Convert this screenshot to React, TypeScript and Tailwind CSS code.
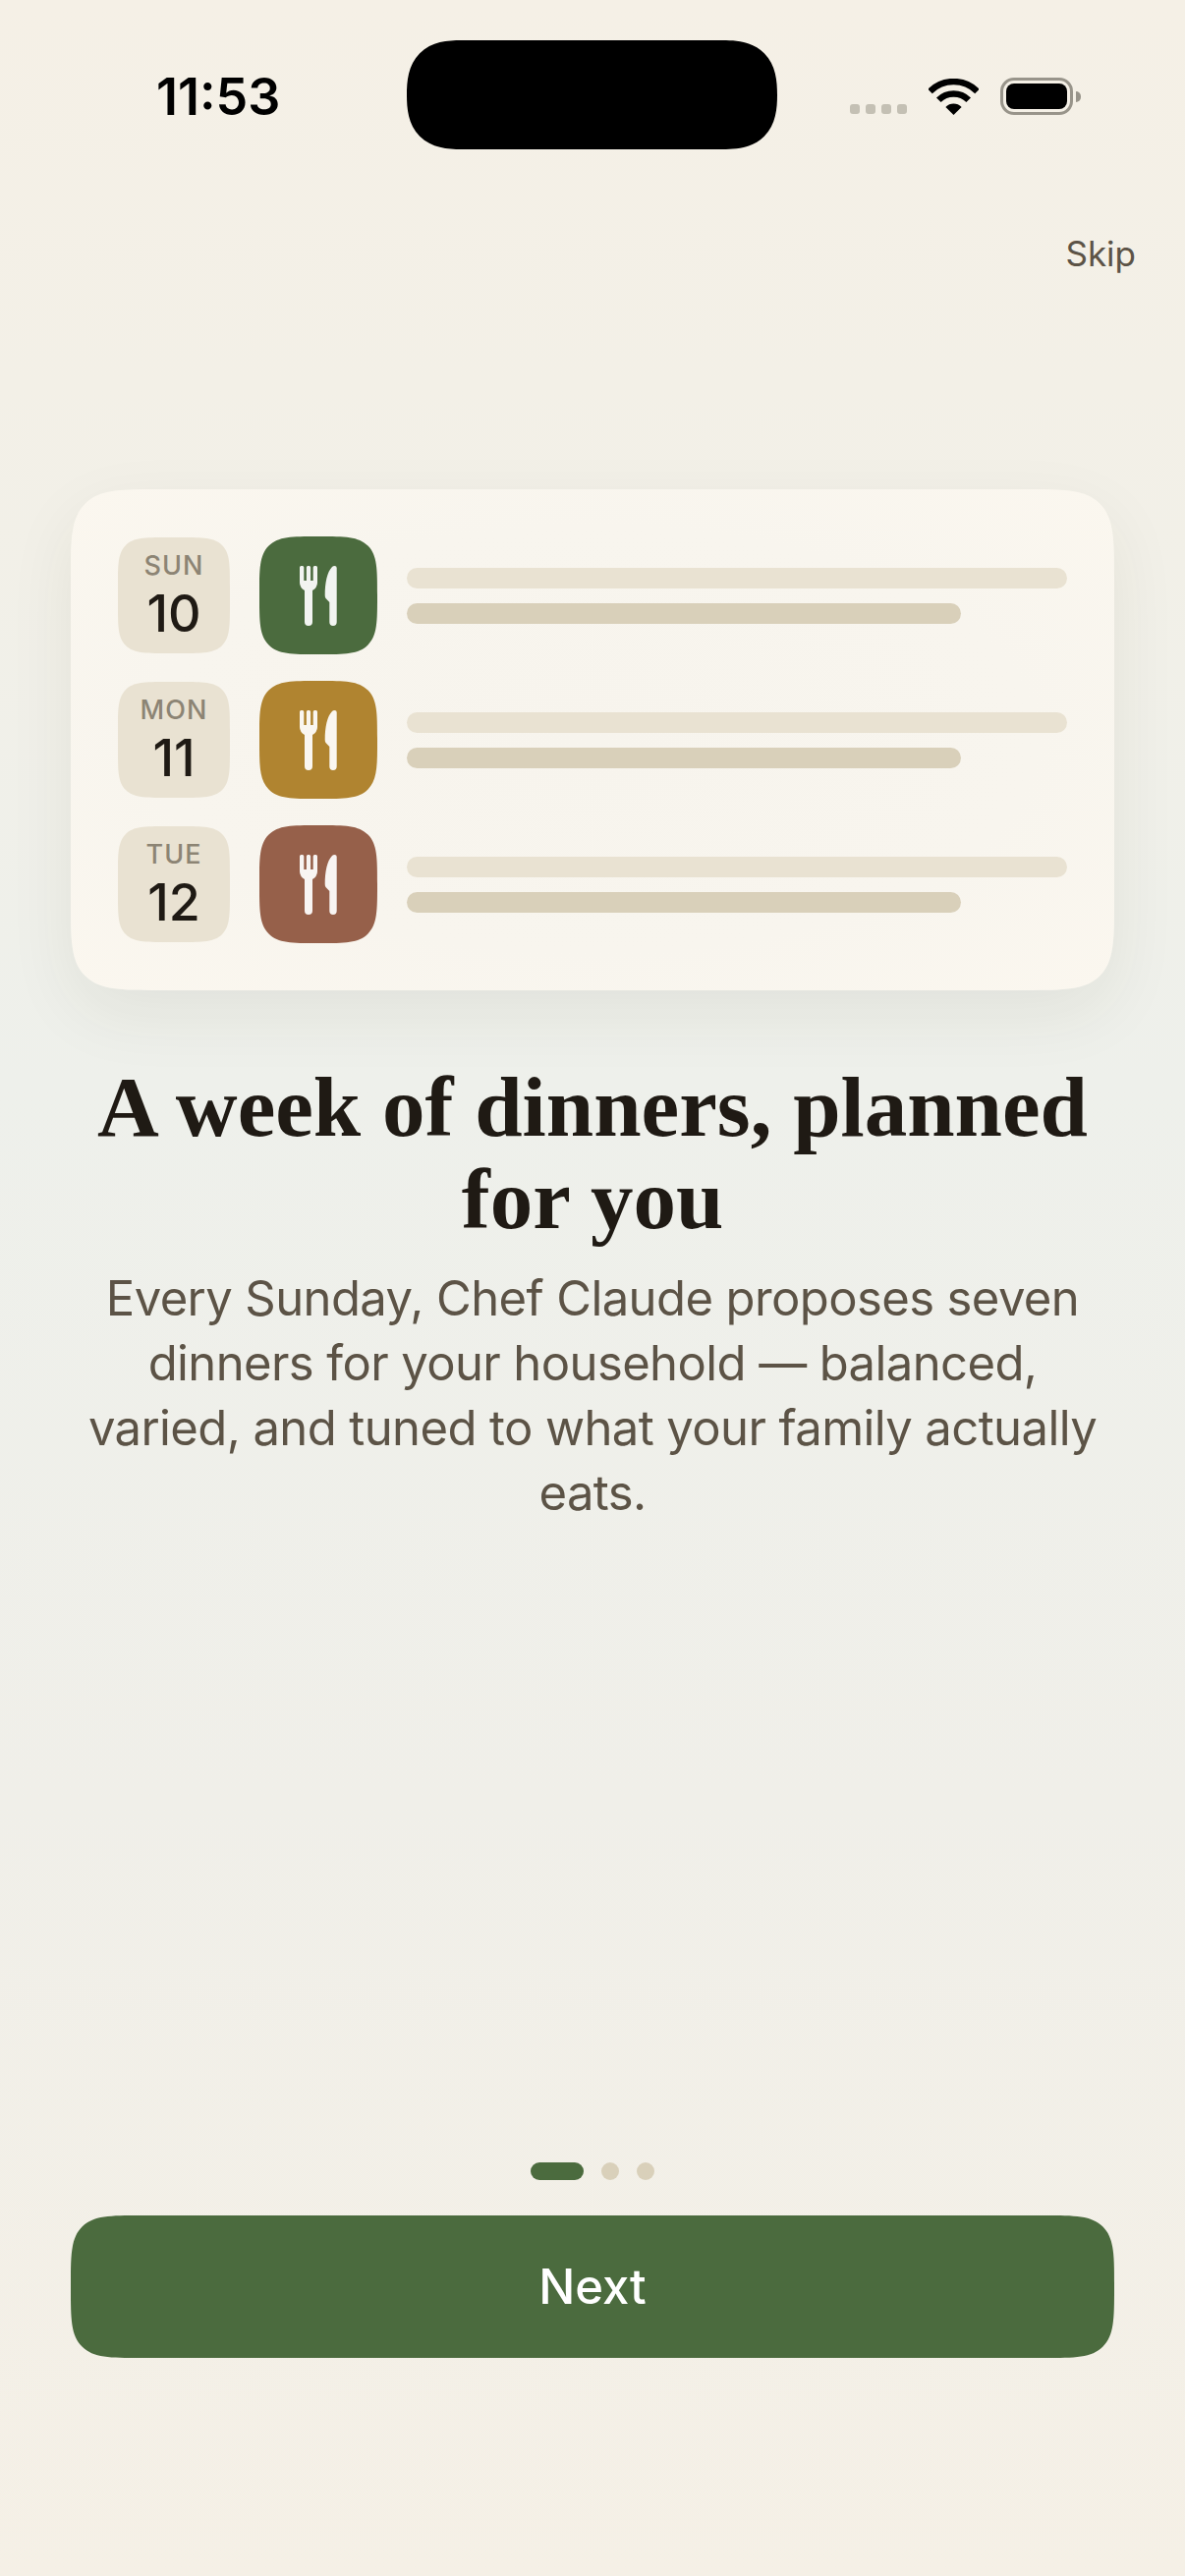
import React from 'react';

const days = [
  { day: 'SUN', date: '10', color: 'bg-[#4b6b3e]' },
  { day: 'MON', date: '11', color: 'bg-[#b08430]' },
  { day: 'TUE', date: '12', color: 'bg-[#96604a]' },
];

function ForkKnife() {
  return (
    <svg width="38" height="61" viewBox="0 0 38 61" fill="#ffffff" fillOpacity="0.93">
      <path d="M0 1.5Q0 0 1.5 0H2.8Q4.3 0 4.3 1.5V15H6.9V1.5Q6.9 0 8.4 0H9.6Q11.1 0 11.1 1.5V15H13.7V1.5Q13.7 0 15.2 0H16.5Q18 0 18 1.5V17Q18 22 13 25V57a4 4 0 0 1-8 0V25Q0 22 0 17Z" />
      <path d="M35.5 0Q37.7 0 37.7 2V57.3a3.7 3.7 0 0 1-7.4 0V37L26.5 33Q25.7 32 25.7 30C25.7 17 28 6 33 1Q34 0 35.5 0Z" />
    </svg>
  );
}

function Wifi() {
  return (
    <svg width="51" height="37" viewBox="0 0 51 37" fill="none">
      <path d="M1.5 13A34 34 0 0 1 49.5 13" stroke="#000" strokeWidth="6.5" />
      <path d="M10.3 21.8A21.5 21.5 0 0 1 40.7 21.8" stroke="#000" strokeWidth="6.5" />
      <path d="M25.5 37L17.4 28.9A11.5 11.5 0 0 1 33.6 28.9Z" fill="#000" />
    </svg>
  );
}

function StatusBar() {
  return (
    <div className="relative flex h-[152px] items-end justify-between pb-[35px] pl-[159px] pr-[106px]">
      <div className="mb-[-8px] text-[52px] font-semibold leading-none text-black">11:53</div>
      <div className="absolute left-[414px] top-[41px] h-[111px] w-[377px] rounded-[56px] bg-black [corner-shape:superellipse(1.35)]" />
      <div className="flex items-end gap-[22px]">
        <div className="mb-px flex gap-[6px]">
          {[0, 1, 2, 3].map((i) => (
            <span key={i} className="h-[10px] w-[10px] rounded-[3px] bg-[#c4c0b4]" />
          ))}
        </div>
        <Wifi />
        <div className="flex items-center gap-[3px]">
          <div className="flex h-[38px] w-[74px] rounded-[14px] border-[3px] border-[#98948a] p-[3px]">
            <div className="flex-1 rounded-[8px] bg-black" />
          </div>
          <div className="h-[11px] w-[5px] rounded-r-full bg-[#98948a]" />
        </div>
      </div>
    </div>
  );
}

export default function App() {
  return (
    <div
      className="flex h-[2622px] w-[1206px] flex-col overflow-hidden bg-[linear-gradient(180deg,#f5f0e6_0%,#f3f0e7_15%,#eef0eb_42%,#f0efe9_70%,#f5f0e6_100%)]"
      style={{ fontFamily: 'Inter, "Liberation Sans", sans-serif' }}
    >
      <StatusBar />

      <div className="mt-[82px] flex justify-end pr-[50px]">
        <button className="text-[35px] leading-[48px] text-[#5c5346]">Skip</button>
      </div>

      <div className="mx-[72px] mt-[216px] flex h-[510px] flex-col gap-[27px] rounded-[92px] bg-[radial-gradient(ellipse_at_center,#f7f4ed_0%,#f8f5ee_60%,#fbf7ef_100%)] p-[48px] shadow-[0_24px_70px_rgba(60,50,30,0.07)] [corner-shape:squircle]">
        {days.map((d) => (
          <div key={d.day} className="flex h-[120px] items-center">
            <div className="flex h-[118px] w-[114px] flex-col items-center justify-center rounded-[50px] bg-[#e9e2d2] [corner-shape:squircle]">
              <span className="text-[27px] font-medium leading-[34px] tracking-[1px] text-[#8c8474]">{d.day}</span>
              <span className="mt-[4px] text-[52px] font-medium leading-[56px] text-[#1f1a14]">{d.date}</span>
            </div>
            <div className={`ml-[30px] flex h-[120px] w-[120px] items-center justify-center rounded-[60px] [corner-shape:squircle] ${d.color}`}>
              <ForkKnife />
            </div>
            <div className="ml-[30px] flex flex-1 flex-col gap-[15px]">
              <div className="h-[21px] rounded-full bg-[#e9e2d2]" />
              <div className="h-[21px] w-[84%] rounded-full bg-[#d9d0ba]" />
            </div>
          </div>
        ))}
      </div>

      <h1
        className="mx-[72px] mt-[72px] text-center text-[87px] font-bold leading-[94px] text-[#1f1a14]"
        style={{ fontFamily: '"Liberation Serif", serif' }}
      >
        A week of dinners, planned for you
      </h1>
      <p className="mx-[72px] mt-[21px] text-center text-[49px] leading-[66px] tracking-[-0.6px] text-[#5c5346]">
        Every Sunday, Chef Claude proposes seven dinners for your household — balanced, varied, and tuned to what your family actually eats.
      </p>

      <div className="flex-1" />

      <div className="flex justify-center gap-[18px]">
        <span className="h-[18px] w-[54px] rounded-full bg-[#4b6b3e]" />
        <span className="h-[18px] w-[18px] rounded-full bg-[#d9d0ba]" />
        <span className="h-[18px] w-[18px] rounded-full bg-[#d9d0ba]" />
      </div>

      <button className="mx-[72px] mb-[222px] mt-[36px] h-[145px] rounded-[76px] bg-[#4b6b3e] text-[49px] font-medium text-white [corner-shape:squircle]">
        Next
      </button>
    </div>
  );
}
